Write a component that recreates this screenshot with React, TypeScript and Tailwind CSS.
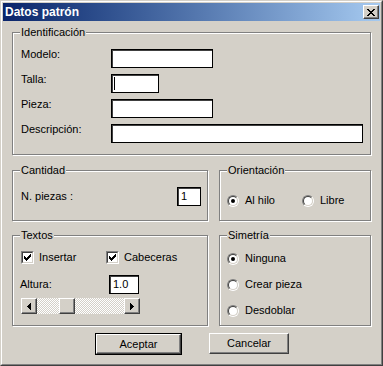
import React from "react";

const bevel =
  "border border-t-white border-l-white border-r-[#404040] border-b-[#404040] shadow-[inset_-1px_-1px_0_#808080] bg-[#d4d0c8]";

function Group({
  label,
  className,
  children,
}: {
  label: string;
  className: string;
  children: React.ReactNode;
}) {
  return (
    <div
      className={
        "relative border border-[#808080] shadow-[inset_1px_1px_0_#ffffff,1px_1px_0_#ffffff] " +
        className
      }
    >
      <span className="absolute left-[7px] -top-[7px] px-px bg-[#d4d0c8] leading-[13px]">
        {label}
      </span>
      {children}
    </div>
  );
}

function TextBox({ w, children }: { w: string; children?: React.ReactNode }) {
  return (
    <div
      className={
        "h-[19px] bg-white border border-black shadow-[inset_1px_1px_0_#404040] flex items-center pl-[3px] " +
        w
      }
    >
      {children}
    </div>
  );
}

function Radio({ checked, label }: { checked?: boolean; label: string }) {
  return (
    <div className="flex items-center gap-[6px]">
      <div className="w-[12px] h-[12px] rounded-full border border-t-[#808080] border-l-[#808080] border-r-white border-b-white">
        <div className="w-full h-full rounded-full border border-t-[#404040] border-l-[#404040] border-r-[#d4d0c8] border-b-[#d4d0c8] bg-white flex items-center justify-center">
          {checked && <div className="w-[4px] h-[4px] rounded-full bg-black" />}
        </div>
      </div>
      <span className="leading-[13px]">{label}</span>
    </div>
  );
}

function Check({ label, className }: { label: string; className?: string }) {
  return (
    <div className={"flex items-center gap-[5px] " + (className ?? "")}>
      <div className="w-[13px] h-[13px] border border-t-[#808080] border-l-[#808080] border-r-white border-b-white">
        <div className="w-full h-full border border-t-[#404040] border-l-[#404040] border-r-[#d4d0c8] border-b-[#d4d0c8] bg-white flex items-center justify-center">
          <svg width="7" height="7" viewBox="0 0 7 7" shapeRendering="crispEdges">
            <path
              fill="#000"
              d="M6 0h1v1h-1z M5 1h2v1h-2z M0 2h1v1h-1z M4 2h3v1h-3z M0 3h2v1h-2z M3 3h3v1h-3z M0 4h5v1h-5z M1 5h3v1h-3z M2 6h1v1h-1z"
            />
          </svg>
        </div>
      </div>
      <span className="leading-[13px]">{label}</span>
    </div>
  );
}

function ArrowLeft() {
  return (
    <svg width="4" height="7" viewBox="0 0 4 7" shapeRendering="crispEdges">
      <path fill="#000" d="M3 0h1v7h-1z M2 1h1v5h-1z M1 2h1v3h-1z M0 3h1v1h-1z" />
    </svg>
  );
}

function ArrowRight() {
  return (
    <svg width="4" height="7" viewBox="0 0 4 7" shapeRendering="crispEdges">
      <path fill="#000" d="M0 0h1v7h-1z M1 1h1v5h-1z M2 2h1v3h-1z M3 3h1v1h-1z" />
    </svg>
  );
}

export default function App() {
  return (
    <div className="w-[383px] h-[366px] border border-t-[#d4d0c8] border-l-[#d4d0c8] border-r-[#404040] border-b-[#404040] bg-[#d4d0c8] font-['Liberation_Sans',Arial,sans-serif] text-[11px] leading-[13px] text-black select-none">
      <div className="h-full border border-t-white border-l-white border-r-[#808080] border-b-[#808080] p-px flex flex-col">
        {/* Title bar */}
        <div className="h-[18px] flex items-center justify-between pl-[2px] pr-[1px] bg-linear-to-r from-[#0a246a] to-[#a6caf0]">
          <span className="text-white font-bold text-[12px] leading-[14px]">Datos patrón</span>
          <div className={"w-[16px] h-[14px] flex items-center justify-center " + bevel}>
            <svg width="8" height="7" viewBox="0 0 8 7" shapeRendering="crispEdges">
              <path
                fill="#000"
                d="M0 0h2v1h-2z M6 0h2v1h-2z M1 1h2v1h-2z M5 1h2v1h-2z M2 2h4v1h-4z M3 3h2v1h-2z M2 4h4v1h-4z M1 5h2v1h-2z M5 5h2v1h-2z M0 6h2v1h-2z M6 6h2v1h-2z"
              />
            </svg>
          </div>
        </div>

        {/* Content */}
        <div className="pl-[9px] pt-[11px] flex flex-col">
          <Group label="Identificación" className="w-[359px] h-[123px] pl-[8px] pt-[16px]">
            <div className="flex flex-col gap-[6px]">
              <div className="flex items-start h-[19px]">
                <span className="w-[90px] -mt-[1px]">Modelo:</span>
                <TextBox w="w-[102px]" />
              </div>
              <div className="flex items-start h-[19px]">
                <span className="w-[90px] -mt-[1px]">Talla:</span>
                <TextBox w="w-[48px]">
                  <div className="w-px h-[13px] bg-black -ml-[1px]" />
                </TextBox>
              </div>
              <div className="flex items-start h-[19px]">
                <span className="w-[90px] -mt-[1px]">Pieza:</span>
                <TextBox w="w-[102px]" />
              </div>
              <div className="flex items-start h-[19px]">
                <span className="w-[90px] -mt-[1px]">Descripción:</span>
                <TextBox w="w-[252px]" />
              </div>
            </div>
          </Group>

          <div className="flex gap-[11px] mt-[15px]">
            <Group label="Cantidad" className="w-[196px] h-[51px] pl-[8px] pt-[16px]">
              <div className="flex items-center h-[19px]">
                <span className="w-[156px]">N. piezas :</span>
                <TextBox w="w-[24px]">1</TextBox>
              </div>
            </Group>
            <Group label="Orientación" className="w-[152px] h-[51px] pl-[7px] pt-[23px]">
              <div className="flex">
                <div className="w-[75px]">
                  <Radio checked label="Al hilo" />
                </div>
                <Radio label="Libre" />
              </div>
            </Group>
          </div>

          <div className="flex gap-[11px] mt-[14px]">
            <Group label="Textos" className="w-[196px] h-[91px] pl-[8px] pt-[15px]">
              <div className="flex h-[13px]">
                <Check label="Insertar" className="w-[85px]" />
                <Check label="Cabeceras" />
              </div>
              <div className="flex items-center h-[19px] mt-[11px]">
                <span className="w-[89px] -ml-px">Altura:</span>
                <TextBox w="w-[30px]">1.0</TextBox>
              </div>
              <div className="flex w-[119px] h-[16px] mt-[4px]">
                <div className={"w-[16px] h-[16px] flex items-center justify-center " + bevel}>
                  <ArrowLeft />
                </div>
                <div className="flex-1 bg-[image:repeating-conic-gradient(#ffffff_0_25%,#d4d0c8_0_50%)] bg-[length:2px_2px]">
                  <div className={"ml-[22px] w-[16px] h-[16px] " + bevel} />
                </div>
                <div className={"w-[16px] h-[16px] flex items-center justify-center " + bevel}>
                  <ArrowRight />
                </div>
              </div>
            </Group>
            <Group label="Simetría" className="w-[152px] h-[91px] pl-[7px] pt-[16px]">
              <div className="flex flex-col gap-[13px]">
                <Radio checked label="Ninguna" />
                <Radio label="Crear pieza" />
                <Radio label="Desdoblar" />
              </div>
            </Group>
          </div>

          <div className="flex gap-[27px] mt-[7px] ml-[83px]">
            <div className="w-[87px] h-[22px] border border-black">
              <div className={"w-full h-full flex items-center justify-center " + bevel}>
                Aceptar
              </div>
            </div>
            <div className={"w-[80px] h-[21px] flex items-center justify-center " + bevel}>
              Cancelar
            </div>
          </div>
        </div>
      </div>
    </div>
  );
}
